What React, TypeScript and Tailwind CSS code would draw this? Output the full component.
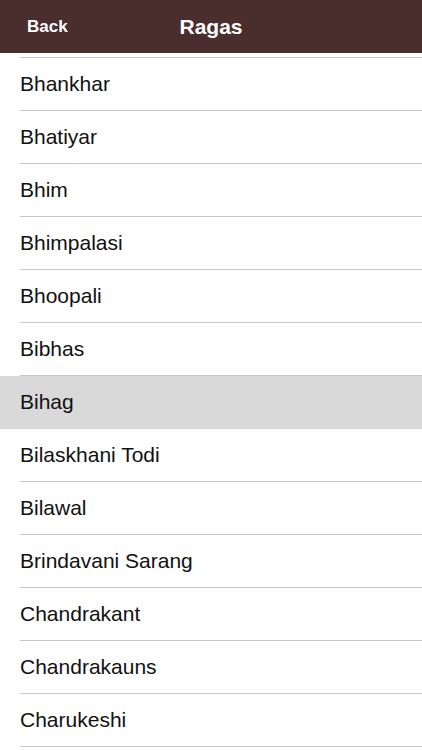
import React from 'react';

const ragas = [
  'Bhankhar',
  'Bhatiyar',
  'Bhim',
  'Bhimpalasi',
  'Bhoopali',
  'Bibhas',
  'Bihag',
  'Bilaskhani Todi',
  'Bilawal',
  'Brindavani Sarang',
  'Chandrakant',
  'Chandrakauns',
  'Charukeshi',
];

export default function App() {
  const selected = 'Bihag';

  return (
    <div className="flex h-[750px] w-full flex-col overflow-hidden bg-white font-['Liberation_Sans',Arial,sans-serif]">
      {/* Nav bar */}
      <div className="relative flex h-[53px] shrink-0 items-center justify-center bg-[#4a2e2e]">
        <button className="absolute left-[27px] text-[17px] font-bold text-white">Back</button>
        <h1 className="text-[21px] font-bold text-white">Ragas</h1>
      </div>

      {/* List */}
      <div className="flex-1 overflow-hidden pt-[4px]">
        <div className="ml-5 h-px bg-[#c8c7cc]" />
        {ragas.map((name) => (
          <div key={name} className={name === selected ? 'bg-[#d9d9d9]' : ''}>
            <div className="flex h-[52px] items-center pl-5 text-[21px] text-[#111]">{name}</div>
            <div className={`ml-5 h-px ${name === selected ? 'bg-[#d9d9d9]' : 'bg-[#c8c7cc]'}`} />
          </div>
        ))}
      </div>
    </div>
  );
}
